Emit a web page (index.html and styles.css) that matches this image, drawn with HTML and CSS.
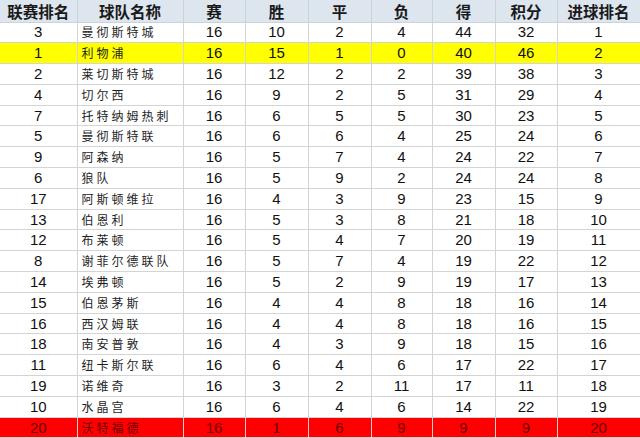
FILE: index.html
```html
<!DOCTYPE html>
<html>
<head>
<meta charset="utf-8">
<link rel="stylesheet" href="styles.css">
</head>
<body>
<table class="standings">
<colgroup>
<col class="c1"><col class="c2"><col class="c3"><col class="c4"><col class="c5"><col class="c6"><col class="c7"><col class="c8"><col class="c9">
</colgroup>
<thead>
<tr><th>联赛排名</th><th>球队名称</th><th>赛</th><th>胜</th><th>平</th><th>负</th><th>得</th><th>积分</th><th>进球排名</th></tr>
</thead>
<tbody>
<tr><td>3</td><td class="team">曼彻斯特城</td><td>16</td><td>10</td><td>2</td><td>4</td><td>44</td><td>32</td><td>1</td></tr>
<tr class="yellow"><td>1</td><td class="team">利物浦</td><td>16</td><td>15</td><td>1</td><td>0</td><td>40</td><td>46</td><td>2</td></tr>
<tr><td>2</td><td class="team">莱切斯特城</td><td>16</td><td>12</td><td>2</td><td>2</td><td>39</td><td>38</td><td>3</td></tr>
<tr><td>4</td><td class="team">切尔西</td><td>16</td><td>9</td><td>2</td><td>5</td><td>31</td><td>29</td><td>4</td></tr>
<tr><td>7</td><td class="team">托特纳姆热刺</td><td>16</td><td>6</td><td>5</td><td>5</td><td>30</td><td>23</td><td>5</td></tr>
<tr><td>5</td><td class="team">曼彻斯特联</td><td>16</td><td>6</td><td>6</td><td>4</td><td>25</td><td>24</td><td>6</td></tr>
<tr><td>9</td><td class="team">阿森纳</td><td>16</td><td>5</td><td>7</td><td>4</td><td>24</td><td>22</td><td>7</td></tr>
<tr><td>6</td><td class="team">狼队</td><td>16</td><td>5</td><td>9</td><td>2</td><td>24</td><td>24</td><td>8</td></tr>
<tr><td>17</td><td class="team">阿斯顿维拉</td><td>16</td><td>4</td><td>3</td><td>9</td><td>23</td><td>15</td><td>9</td></tr>
<tr><td>13</td><td class="team">伯恩利</td><td>16</td><td>5</td><td>3</td><td>8</td><td>21</td><td>18</td><td>10</td></tr>
<tr><td>12</td><td class="team">布莱顿</td><td>16</td><td>5</td><td>4</td><td>7</td><td>20</td><td>19</td><td>11</td></tr>
<tr><td>8</td><td class="team">谢菲尔德联队</td><td>16</td><td>5</td><td>7</td><td>4</td><td>19</td><td>22</td><td>12</td></tr>
<tr><td>14</td><td class="team">埃弗顿</td><td>16</td><td>5</td><td>2</td><td>9</td><td>19</td><td>17</td><td>13</td></tr>
<tr><td>15</td><td class="team">伯恩茅斯</td><td>16</td><td>4</td><td>4</td><td>8</td><td>18</td><td>16</td><td>14</td></tr>
<tr><td>16</td><td class="team">西汉姆联</td><td>16</td><td>4</td><td>4</td><td>8</td><td>18</td><td>16</td><td>15</td></tr>
<tr><td>18</td><td class="team">南安普敦</td><td>16</td><td>4</td><td>3</td><td>9</td><td>18</td><td>15</td><td>16</td></tr>
<tr><td>11</td><td class="team">纽卡斯尔联</td><td>16</td><td>6</td><td>4</td><td>6</td><td>17</td><td>22</td><td>17</td></tr>
<tr><td>19</td><td class="team">诺维奇</td><td>16</td><td>3</td><td>2</td><td>11</td><td>17</td><td>11</td><td>18</td></tr>
<tr><td>10</td><td class="team">水晶宫</td><td>16</td><td>6</td><td>4</td><td>6</td><td>14</td><td>22</td><td>19</td></tr>
<tr class="red"><td>20</td><td class="team">沃特福德</td><td>16</td><td>1</td><td>6</td><td>9</td><td>9</td><td>9</td><td>20</td></tr>
</tbody>
</table>
</body>
</html>
```
FILE: styles.css
```css
html, body {
  margin: 0;
  padding: 0;
  background: #ffffff;
  overflow: hidden;
}
.standings {
  border-collapse: collapse;
  table-layout: fixed;
  width: 640px;
  font-family: "Liberation Sans", "Noto Sans CJK SC", sans-serif;
  color: #111;
}
.c1 { width: 77px; }
.c2 { width: 106px; }
.c3 { width: 62px; }
.c4 { width: 63px; }
.c5 { width: 63px; }
.c6 { width: 61px; }
.c7 { width: 63px; }
.c8 { width: 62px; }
.c9 { width: 83px; }
.standings thead tr {
  height: 22px;
}
.standings tbody tr {
  height: 20.8px;
}
.standings th {
  padding: 0;
  background: #dde5ef;
  font-family: "Noto Sans CJK SC", sans-serif;
  font-weight: bold;
  font-size: 15.5px;
  line-height: 16px;
  color: #1a1a1a;
  border: 1px solid #c9d3df;
  border-top: none;
  text-align: center;
}
.standings td {
  padding: 0;
  font-size: 15px;
  line-height: 16px;
  text-align: center;
  border: 1px solid #d4d4d4;
  overflow: hidden;
  white-space: nowrap;
}
.standings td.team {
  text-align: left;
  padding-left: 4px;
  font-family: "Noto Sans CJK SC", sans-serif;
  font-size: 12px;
  letter-spacing: 3px;
  color: #1e1e1e;
}
.standings tr.yellow td {
  background: #ffff00;
}
.standings tr.red td {
  background: #ff0000;
  color: #6b0000;
}
.standings tr td:first-child,
.standings tr th:first-child { border-left: none; }
```
